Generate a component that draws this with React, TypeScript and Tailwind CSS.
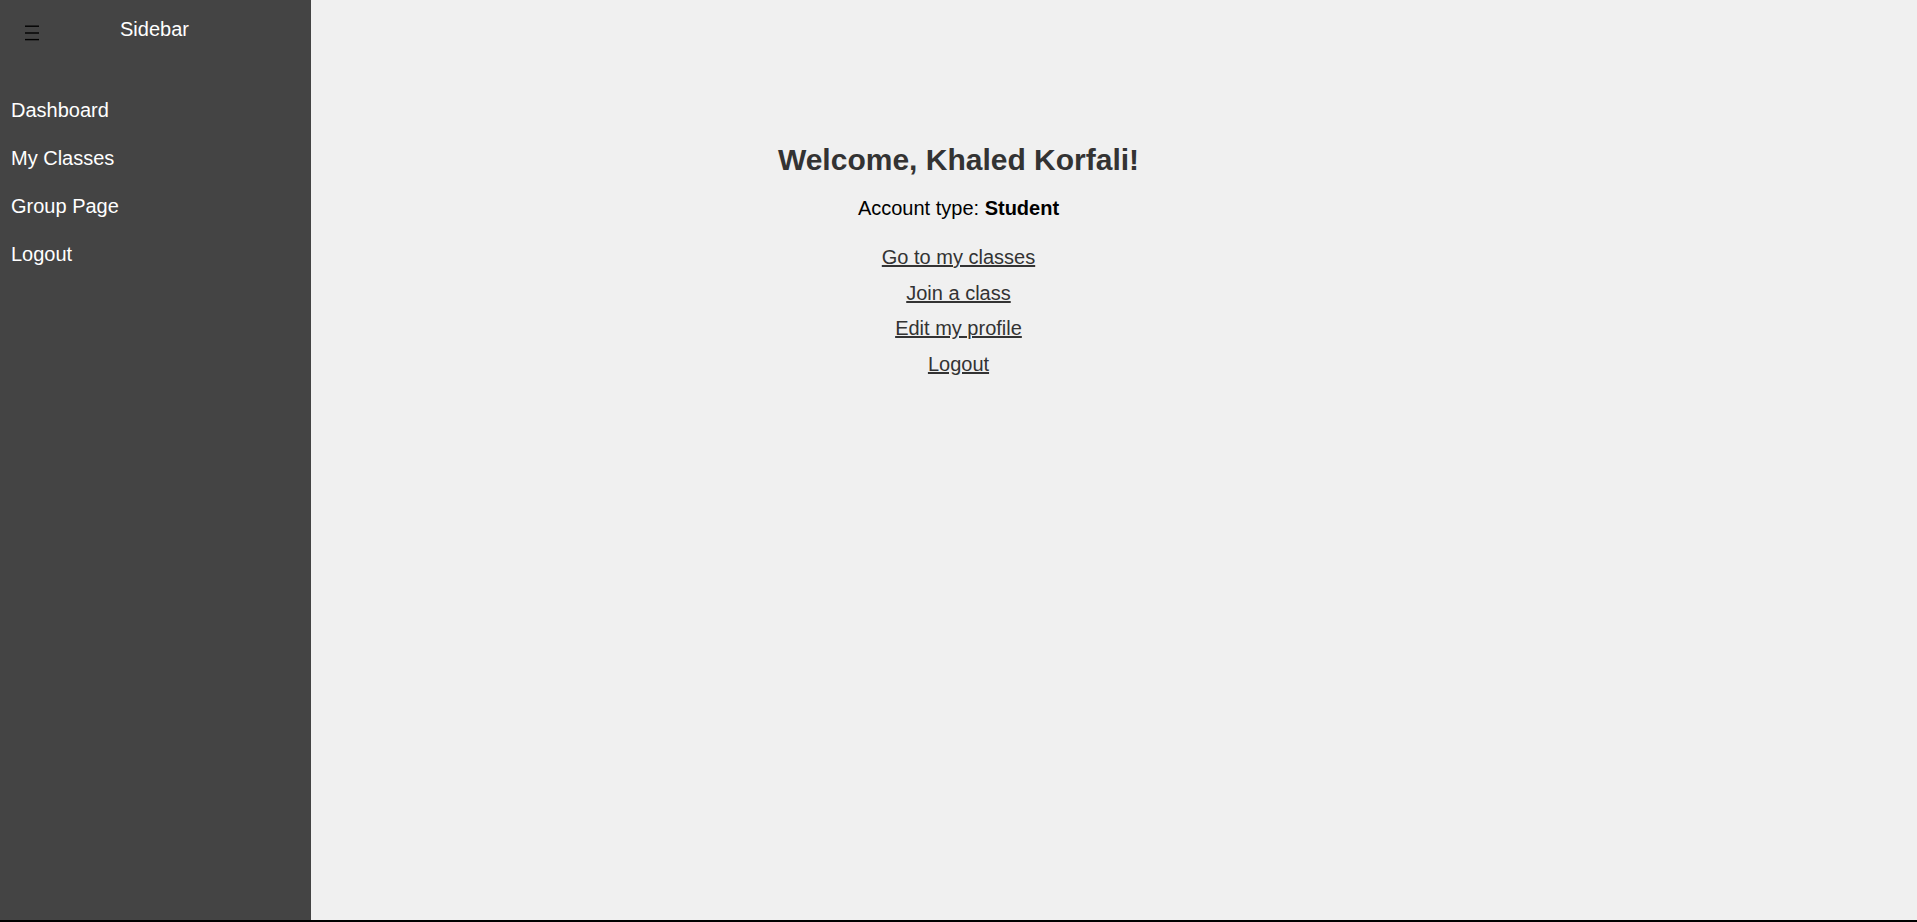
import React from "react";

export default function App() {
  const nav = ["Dashboard", "My Classes", "Group Page", "Logout"];
  const links = ["Go to my classes", "Join a class", "Edit my profile", "Logout"];
  return (
    <div className="h-[922px] bg-black font-['Liberation_Sans',Arial,sans-serif]">
      <div className="relative h-[920px] bg-[#f0f0f0]">
        <main className="flex flex-col items-center pt-[141.6px] text-center">
          <h2 className="text-[30px] leading-[36px] font-bold text-[#333]">Welcome, Khaled Korfali!</h2>
          <p className="mt-[18.5px] text-[20px] leading-[24px] text-black">
            Account type: <strong className="font-bold">Student</strong>
          </p>
          <div className="mt-[25px] flex flex-col items-center gap-[11.6px]">
            {links.map((l) => (
              <a key={l} href="#" className="text-[20px] leading-[24px] text-[#333] underline">
                {l}
              </a>
            ))}
          </div>
        </main>
        <aside className="absolute left-0 top-0 h-full w-[311px] bg-[#444444] text-white">
          <div className="relative pt-[17px]">
            <svg className="absolute left-[25px] top-[25px]" width="14" height="16" viewBox="0 0 14 16">
              <line x1="0" y1="1.2" x2="14" y2="1.2" stroke="#000" strokeWidth="1.4" />
              <line x1="0" y1="8" x2="14" y2="8" stroke="#000" strokeWidth="1.4" />
              <line x1="0" y1="14.6" x2="14" y2="14.6" stroke="#000" strokeWidth="1.4" />
            </svg>
            <div className="pr-[2px] text-center text-[20px] leading-[24px]">Sidebar</div>
          </div>
          <nav className="mt-[45px] flex flex-col">
            {nav.map((n) => (
              <a key={n} href="#" className="py-[12px] pl-[11px] text-[20px] leading-[24px] text-white">
                {n}
              </a>
            ))}
          </nav>
        </aside>
      </div>
    </div>
  );
}
